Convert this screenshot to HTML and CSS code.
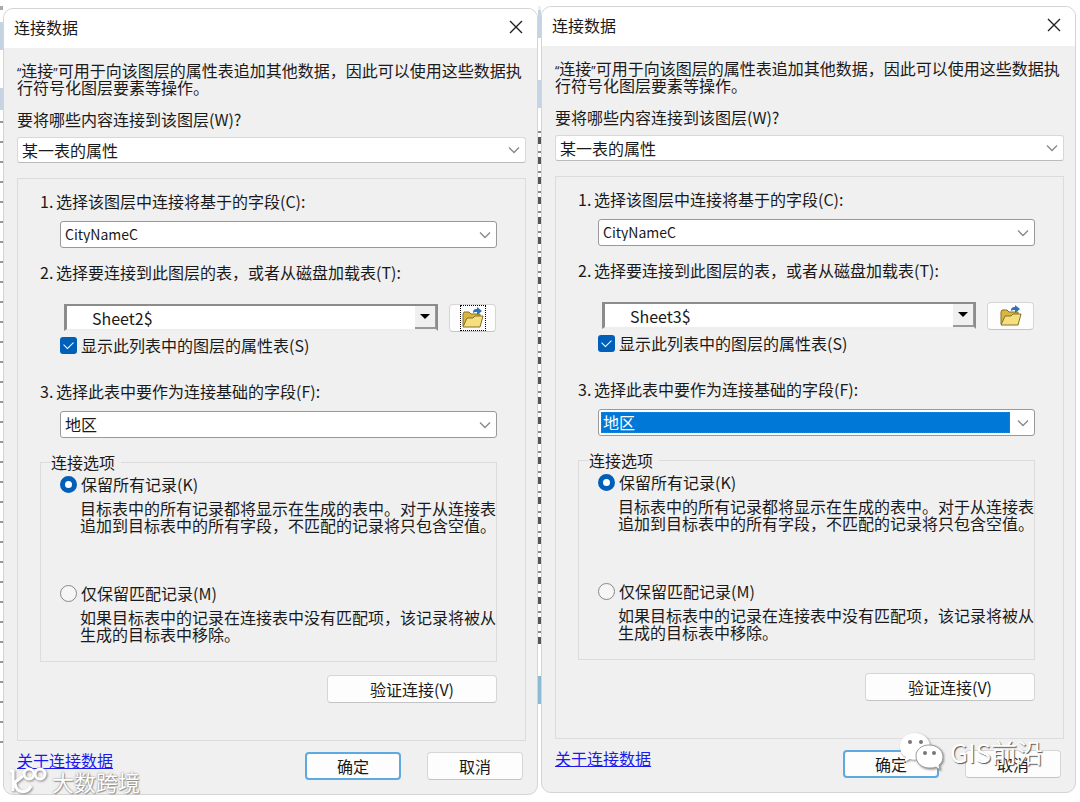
FILE: index.html
```html
<!DOCTYPE html>
<html lang="zh-cn">

<head>
    <meta charset="UTF-8">
    <meta name="viewport" content="width=device-width, initial-scale=1.0">
    <title>连接数据</title>
    <link rel="stylesheet" href="styles.css">
</head>

<body>
    <svg class="defs" width="0" height="0">
        <symbol id="close" viewBox="0 0 14 14">
            <path d="M1 1L13 13M13 1L1 13" fill="none" stroke="#222" stroke-width="1.4" />
        </symbol>
        <symbol id="arrow" viewBox="0 0 12 8">
            <path d="M1 1.5L6 6.5L11 1.5" fill="none" stroke="#8a8a8a" stroke-width="1.4" />
        </symbol>
        <symbol id="folder" viewBox="0 0 24 24">
            <path d="M2 8L3 6H8L10 8H19V20H2Z" fill="#d9b640" stroke="#85702a" />
            <path d="M2 21L6 12H12L14 10H22L19 21Z" fill="#f6df7d" stroke="#85702a" />
            <path d="M12 7C12 4 13 3 16 3V1L21 5L16 9V6C14 6 13 6 12 7Z" fill="#2b74b5" />
        </symbol>
    </svg>
    <div class="bg">
        <div class="strip"></div>
        <div class="dialog dialog1">
            <div class="title">
                <h1>连接数据</h1>
                <button class="close" aria-label="关闭"><svg><use href="#close" /></svg></button>
            </div>
            <div class="content">
                <p class="intro"><span class="quote">“</span>连接<span class="quote">”</span>可用于向该图层的属性表追加其他数据，因此可以使用这些数据执行符号化图层要素等操作。</p>
                <label class="what" for="what1">要将哪些内容连接到该图层(W)?</label>
                <div class="selectBx light">
                    <select id="what1"><option>某一表的属性</option></select>
                    <svg><use href="#arrow" /></svg>
                </div>
                <div class="group">
                    <label class="step" for="field1"><span>1.</span>选择该图层中连接将基于的字段(C):</label>
                    <div class="selectBx">
                        <select id="field1" class="en"><option>CityNameC</option></select>
                        <svg><use href="#arrow" /></svg>
                    </div>
                    <label class="step" for="table1"><span>2.</span>选择要连接到此图层的表，或者从磁盘加载表(T):</label>
                    <div class="tableRow">
                        <div class="oldSelect">
                            <select id="table1"><option>Sheet2$</option></select>
                            <span class="drop"></span>
                        </div>
                        <button class="btn open focus" aria-label="打开"><svg><use href="#folder" /></svg></button>
                    </div>
                    <label class="check"><input type="checkbox" checked>显示此列表中的图层的属性表(S)</label>
                    <label class="step" for="base1"><span>3.</span>选择此表中要作为连接基础的字段(F):</label>
                    <div class="selectBx">
                        <select id="base1"><option>地区</option></select>
                        <svg><use href="#arrow" /></svg>
                    </div>
                    <fieldset>
                        <legend>连接选项</legend>
                        <label class="check"><input type="radio" name="keep1" checked>保留所有记录(K)</label>
                        <p class="desc">目标表中的所有记录都将显示在生成的表中。对于从连接表追加到目标表中的所有字段，不匹配的记录将只包含空值。</p>
                        <label class="check"><input type="radio" name="keep1">仅保留匹配记录(M)</label>
                        <p class="desc">如果目标表中的记录在连接表中没有匹配项，该记录将被从生成的目标表中移除。</p>
                    </fieldset>
                    <button class="btn verify">验证连接(V)</button>
                </div>
                <div class="footer">
                    <a href="#">关于连接数据</a>
                    <button class="btn ok">确定</button>
                    <button class="btn">取消</button>
                </div>
            </div>
        </div>
        <div class="strip strip2"></div>
        <div class="dialog dialog2">
            <div class="title">
                <h1>连接数据</h1>
                <button class="close" aria-label="关闭"><svg><use href="#close" /></svg></button>
            </div>
            <div class="content">
                <p class="intro"><span class="quote">“</span>连接<span class="quote">”</span>可用于向该图层的属性表追加其他数据，因此可以使用这些数据执行符号化图层要素等操作。</p>
                <label class="what" for="what2">要将哪些内容连接到该图层(W)?</label>
                <div class="selectBx light">
                    <select id="what2"><option>某一表的属性</option></select>
                    <svg><use href="#arrow" /></svg>
                </div>
                <div class="group">
                    <label class="step" for="field2"><span>1.</span>选择该图层中连接将基于的字段(C):</label>
                    <div class="selectBx">
                        <select id="field2" class="en"><option>CityNameC</option></select>
                        <svg><use href="#arrow" /></svg>
                    </div>
                    <label class="step" for="table2"><span>2.</span>选择要连接到此图层的表，或者从磁盘加载表(T):</label>
                    <div class="tableRow">
                        <div class="oldSelect">
                            <select id="table2"><option>Sheet3$</option></select>
                            <span class="drop"></span>
                        </div>
                        <button class="btn open" aria-label="打开"><svg><use href="#folder" /></svg></button>
                    </div>
                    <label class="check"><input type="checkbox" checked>显示此列表中的图层的属性表(S)</label>
                    <label class="step" for="base2"><span>3.</span>选择此表中要作为连接基础的字段(F):</label>
                    <div class="selectBx active">
                        <select id="base2"><option>地区</option></select>
                        <svg><use href="#arrow" /></svg>
                    </div>
                    <fieldset>
                        <legend>连接选项</legend>
                        <label class="check"><input type="radio" name="keep2" checked>保留所有记录(K)</label>
                        <p class="desc">目标表中的所有记录都将显示在生成的表中。对于从连接表追加到目标表中的所有字段，不匹配的记录将只包含空值。</p>
                        <label class="check"><input type="radio" name="keep2">仅保留匹配记录(M)</label>
                        <p class="desc">如果目标表中的记录在连接表中没有匹配项，该记录将被从生成的目标表中移除。</p>
                    </fieldset>
                    <button class="btn verify">验证连接(V)</button>
                </div>
                <div class="footer">
                    <a href="#">关于连接数据</a>
                    <button class="btn ok">确定</button>
                    <button class="btn">取消</button>
                </div>
            </div>
        </div>
        <!-- 水印 -->
        <div class="mark mark1">
            <svg viewBox="0 0 40 28">
                <path d="M2 4H5V24M15 9L6 16M7 16C8 27 19 27 23 19" />
                <circle cx="21" cy="7" r="5" />
                <circle cx="32" cy="7" r="5" />
            </svg>
            <span>大数跨境</span>
        </div>
        <div class="mark mark2">
            <svg viewBox="0 0 44 40">
                <path d="M16 1C7 1 1 7 1 14C1 19 3 23 7 25L5 30L11 27C13 28 17 28 20 27C30 26 32 18 31 13C30 6 24 1 16 1Z" />
                <path class="front" d="M30 13C22 13 17 18 17 24C17 31 23 36 30 36C33 36 35 36 37 35L41 38L40 33C43 31 44 28 44 24C43 17 37 13 30 13Z" />
                <g class="eyes">
                    <circle cx="11" cy="10" r="2" />
                    <circle cx="22" cy="10" r="2" />
                    <circle cx="26" cy="21" r="2" />
                    <circle cx="35" cy="21" r="2" />
                </g>
            </svg>
            <span>GIS前沿</span>
        </div>
    </div>
</body>

</html>
```
FILE: styles.css
```css
* {
    margin: 0;
    padding: 0;
    box-sizing: border-box;
}

body {
    background-color: #fff;
    color: #1a1a1a;
    font-family: "Noto Sans CJK SC", sans-serif;
    font-size: 16px;
    line-height: 20px;
}

button,
select {
    font: inherit;
    color: inherit;
}

.defs {
    position: absolute;
}

.bg {
    position: relative;
    display: grid;
    grid-template-columns: 3px 1fr 3px 1fr;
    align-items: start;
    padding: 6px 4px 0 0;
}

/* 对话框后面露出的窗口边缘 */
.strip {
    align-self: stretch;
    margin-bottom: 40px;
    background: linear-gradient(#aaa 0 4px, #fff 4px 16px, #c5d3e2 16px 44px, #fff 44px 82px, #c5d3e2 82px 104px, transparent 104px),
        repeating-linear-gradient(#fff 0 15px, #999 15px 17px, #fff 17px 20px);
}

.strip2 {
    background: linear-gradient(#eee 0 4px, #c5d3e2 4px 32px, #fff 32px 74px, #c5d3e2 74px 102px, #fff 102px 120px, transparent 120px 644px, #fff 644px 670px, #8abbd2 670px 698px, #fff 698px),
        repeating-linear-gradient(#fff 0 5px, #888 5px 7px, #fff 7px 11px, #555 11px 18px, #fff 18px 20px);
}

.dialog {
    border: 1px solid #d4d4d4;
    border-radius: 10px;
    background-color: #f0f0f0;
    overflow: hidden;
}

.dialog1 {
    margin-top: 2px;
}

.title {
    display: flex;
    align-items: center;
    justify-content: space-between;
    height: 39px;
    padding: 0 14px 3px 10px;
    background-color: #fff;
}

.title h1 {
    font-size: 16px;
    font-weight: normal;
}

.close {
    width: 14px;
    height: 14px;
    border: none;
    background: none;
}

.close svg {
    display: block;
    width: 14px;
    height: 14px;
}

.content {
    padding: 14px 11px 14px 13px;
}

.intro,
.desc {
    line-height: 17px;
}

.quote {
    font-family: "Noto Sans", sans-serif;
    font-size: 12px;
    line-height: 1;
}

.what {
    display: block;
    margin-top: 13px;
}

.selectBx {
    display: flex;
    align-items: center;
    height: 27px;
    padding: 2px 5px 2px 2px;
    border: 1px solid #999;
    border-radius: 3px;
    background-color: #fff;
}

.selectBx.light {
    height: 26px;
    margin-top: 8px;
    border-color: #d8d8d8;
    border-bottom-color: #bbb;
}

.selectBx select,
.oldSelect select {
    flex: 1;
    height: 100%;
    padding: 0 0 1px 2px;
    border: none;
    background: none;
    line-height: 18px;
    appearance: none;
}

.selectBx select.en {
    font-size: 14px;
}

.selectBx svg {
    width: 12px;
    height: 8px;
    margin-left: 7px;
}

.selectBx.active select {
    background-color: #0078d7;
    color: #fff;
    outline: 1px dotted #b06020;
    outline-offset: -1px;
}

.group {
    display: flex;
    flex-direction: column;
    margin-top: 15px;
    padding: 12px 28px 37px 22px;
    border: 1px solid #dcdcdc;
}

.group > .selectBx {
    margin: 10px 0 0 20px;
}

.step {
    display: flex;
}

.step span {
    width: 16px;
}

.group > .selectBx + .step {
    margin-top: 14px;
}

.tableRow {
    display: flex;
    gap: 11px;
    margin: 22px 1px 0 24px;
}

.oldSelect {
    display: flex;
    flex: 1;
    height: 27px;
    border: 2px solid #8c8c8c;
    border-left-width: 3px;
    border-bottom-color: #eee;
    background-color: #fff;
}

.oldSelect select {
    padding: 0 0 0 25px;
}

.drop {
    display: flex;
    align-items: center;
    justify-content: center;
    width: 21px;
    border-right: 1px solid #999;
    border-bottom: 2px solid #999;
    background-color: #f0f0f0;
}

.drop::after {
    content: "";
    border: 5px solid transparent;
    border-top-color: #000;
    border-bottom: none;
}

.btn {
    width: 96px;
    height: 28px;
    border: 1px solid #d6d6d6;
    border-bottom-color: #c4c4c4;
    border-radius: 4px;
    background-color: #fdfdfd;
}

.open {
    display: flex;
    justify-content: center;
    align-items: center;
    width: 47px;
}

.open svg {
    width: 24px;
    height: 24px;
}

.focus svg {
    outline: 1px dotted #000;
}

.check {
    display: flex;
    align-items: center;
    gap: 4px;
    margin: 3px 0 0 20px;
}

.check input {
    width: 17px;
    height: 17px;
    border: 1px solid #888;
    border-radius: 50%;
    background-color: #f6f6f6;
    appearance: none;
}

.check input[type="radio"]:checked {
    border: 5px solid #005fb8;
    background-color: #fff;
}

.check input[type="checkbox"] {
    display: flex;
    justify-content: center;
    padding-top: 4px;
    border: none;
    border-radius: 3px;
    background-color: #005fb8;
}

.check input[type="checkbox"]::after {
    content: "";
    width: 8px;
    height: 5px;
    border: 1px solid #fff;
    border-top: none;
    border-right: none;
    transform: rotate(-45deg);
}

.check + .step {
    margin-top: 26px;
}

fieldset {
    margin-top: 14px;
    padding: 2px 0 18px 19px;
    border: 1px solid #dcdcdc;
}

legend {
    margin-left: -9px;
    padding-right: 6px;
}

fieldset .check {
    margin: 0;
}

.desc {
    margin: 6px 0 0 20px;
}

.desc + .check {
    margin-top: 49px;
}

.verify {
    align-self: flex-end;
    width: 170px;
    margin-top: 13px;
}

.footer {
    display: flex;
    gap: 26px;
    margin: 11px 3px 0 0;
}

.footer a {
    margin-right: auto;
    color: #1a1aee;
    line-height: 16px;
}

.ok {
    border: 2px solid #5ea9dd;
}

.mark {
    position: absolute;
    display: flex;
    align-items: center;
    color: #fff;
    pointer-events: none;
}

.mark svg {
    fill: #fff;
    filter: drop-shadow(1px 1px 1px #888);
}

.mark1 {
    left: 8px;
    top: 767px;
    gap: 4px;
    font-size: 22px;
    line-height: 28px;
    text-shadow: 0 0 2px #777, 1px 1px 1px #999;
}

.mark1 svg {
    width: 40px;
    height: 28px;
    fill: none;
    stroke: #fff;
    stroke-width: 3;
}

.mark2 {
    right: 37px;
    top: 732px;
    gap: 7px;
    font-size: 26px;
    line-height: 40px;
    text-shadow: 1px 1px 1px #555;
}

.mark2 svg {
    width: 44px;
    height: 40px;
}

.mark2 .front {
    stroke: #999;
    stroke-width: 1;
}

.mark2 .eyes {
    fill: #777;
}
```
